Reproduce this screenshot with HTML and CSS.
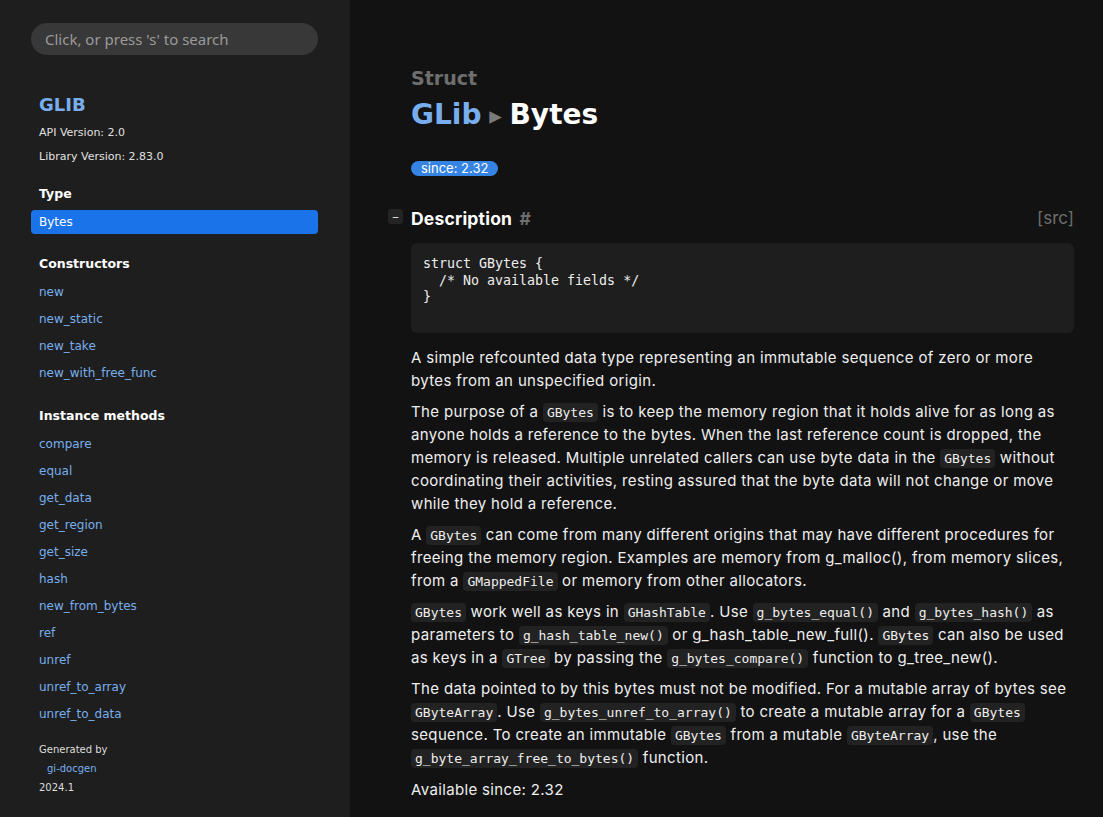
FILE: index.html
```html
<!DOCTYPE html>
<html lang="en">
<head>
<meta charset="utf-8">
<title>GLib.Bytes</title>
<link rel="stylesheet" href="styles.css">
</head>
<body>
<div class="page">
  <nav class="sidebar">
    <div class="search">Click, or press 's' to search</div>
    <div class="ns">
      <h2 class="ns-name">GLIB</h2>
      <p class="meta">API Version: 2.0</p>
      <p class="meta">Library Version: 2.83.0</p>
    </div>
    <div class="section first">
      <h3 class="sec-title">Type</h3>
      <a class="item current">Bytes</a>
    </div>
    <div class="section list">
      <h3 class="sec-title">Constructors</h3>
      <a class="item">new</a>
      <a class="item">new_static</a>
      <a class="item">new_take</a>
      <a class="item">new_with_free_func</a>
    </div>
    <div class="section list">
      <h3 class="sec-title">Instance methods</h3>
      <a class="item">compare</a>
      <a class="item">equal</a>
      <a class="item">get_data</a>
      <a class="item">get_region</a>
      <a class="item">get_size</a>
      <a class="item">hash</a>
      <a class="item">new_from_bytes</a>
      <a class="item">ref</a>
      <a class="item">unref</a>
      <a class="item">unref_to_array</a>
      <a class="item">unref_to_data</a>
    </div>
    <div class="generated">
      <p>Generated by</p>
      <p class="gen-link">gi-docgen</p>
      <p>2024.1</p>
    </div>
  </nav>
  <main class="content">
    <header class="title">
      <div class="kind">Struct</div>
      <h1 class="name"><span class="ns-link">GLib</span> <span class="sep">▸</span> <span>Bytes</span></h1>
    </header>
    <div class="badges"><span class="badge">since: 2.32</span></div>
    <section class="desc">
      <div class="desc-head">
        <span class="toggle">−</span>
        <h4 class="desc-title">Description <span class="anchor">#</span></h4>
        <span class="src">[src]</span>
      </div>
      <pre class="codeblock">struct GBytes {
  /* No available fields */
}</pre>
      <p>A simple refcounted data type representing an immutable sequence of zero or more bytes from an unspecified origin.</p>
      <p>The purpose of a <code>GBytes</code> is to keep the memory region that it holds alive for as long as anyone holds a reference to the bytes. When the last reference count is dropped, the memory is released. Multiple unrelated callers can use byte data in the <code>GBytes</code> without coordinating their activities, resting assured that the byte data will not change or move while they hold a reference.</p>
      <p>A <code>GBytes</code> can come from many different origins that may have different procedures for freeing the memory region. Examples are memory from g_malloc(), from memory slices, from a <code>GMappedFile</code> or memory from other allocators.</p>
      <p><code>GBytes</code> work well as keys in <code>GHashTable</code>. Use <code>g_bytes_equal()</code> and <code>g_bytes_hash()</code> as parameters to <code>g_hash_table_new()</code> or g_hash_table_new_full(). <code>GBytes</code> can also be used as keys in a <code>GTree</code> by passing the <code>g_bytes_compare()</code> function to g_tree_new().</p>
      <p>The data pointed to by this bytes must not be modified. For a mutable array of bytes see <code>GByteArray</code>. Use <code>g_bytes_unref_to_array()</code> to create a mutable array for a <code>GBytes</code> sequence. To create an immutable <code>GBytes</code> from a mutable <code>GByteArray</code>, use the <code>g_byte_array_free_to_bytes()</code> function.</p>
      <p>Available since: 2.32</p>
    </section>
  </main>
</div>
</body>
</html>
```
FILE: styles.css
```css
* { box-sizing: border-box; }
html, body { margin: 0; padding: 0; height: 100%; }
body {
  background: #121212;
  color: #eeeeee;
  font-family: Inter, "Noto Sans", sans-serif;
  overflow: hidden;
}
.page { display: flex; height: 817px; }
.sidebar {
  width: 350px;
  flex: none;
  background: #1e1e1e;
  padding: 23px 32px 0 31px;
  font-family: "DejaVu Sans", sans-serif;
}
.search {
  height: 32px;
  border-radius: 16px;
  background: #383838;
  color: #9a9a9a;
  font-family: "Noto Sans", sans-serif;
  font-size: 15px;
  line-height: 32px;
  padding-left: 14px;
}
.ns { padding: 39px 0 0 8px; }
.ns-name {
  margin: 0;
  font-size: 18px;
  font-weight: bold;
  color: #78aeed;
  line-height: 22px;
}
.meta {
  margin: 0;
  font-size: 11px;
  line-height: 24px;
  color: #e0e0e0;
}
.meta:first-of-type { margin-top: 5px; }
.section { display: flex; flex-direction: column; margin-top: 19px; }
.section.first { margin-top: 15px; }
.sec-title {
  margin: 0 0 4px 8px;
  font-size: 12.5px;
  font-weight: bold;
  color: #ffffff;
  line-height: 20px;
}
.section.list .sec-title { margin-bottom: 5px; }
.item {
  font-size: 12px;
  line-height: 27px;
  color: #78aeed;
  padding-left: 8px;
}
.item.current {
  background: #1a73e8;
  color: #ffffff;
  border-radius: 4px;
  line-height: 24px;
  margin: 2px 0 1px;
}
.generated { padding: 12px 0 0 8px; font-size: 10px; color: #dddddd; }
.generated p { margin: 0; line-height: 19px; }
.generated .gen-link { color: #78aeed; padding-left: 8px; }
.content {
  flex: 1;
  padding: 66px 29px 0 61px;
}
.kind {
  font-family: "DejaVu Sans", sans-serif;
  font-size: 19px;
  font-weight: bold;
  color: #6e6e6e;
  line-height: 24px;
}
.name {
  margin: 3px 0 0;
  font-family: "DejaVu Sans", sans-serif;
  font-size: 28px;
  font-weight: bold;
  line-height: 44px;
  color: #ffffff;
  word-spacing: -2px;
}
.ns-link { color: #78aeed; }
.sep { color: #7a7a7a; font-size: 25px; vertical-align: 0; }
.badges { margin-top: 19px; }
.badge {
  display: inline-block;
  background: #3584e4;
  color: #ffffff;
  font-size: 13px;
  line-height: 15px;
  padding: 0 10px;
  border-radius: 8px;
}
.desc { margin-top: 28px; }
.desc-head { display: flex; align-items: center; position: relative; height: 26px; }
.toggle {
  position: absolute;
  left: -23px;
  top: 4px;
  width: 15px;
  height: 15px;
  background: #242424;
  border-radius: 3px;
  color: #dddddd;
  font-size: 12px;
  line-height: 15px;
  text-align: center;
}
.desc-title {
  margin: 0;
  font-size: 17.5px;
  font-weight: 700;
  letter-spacing: 0.2px;
  color: #ffffff;
  flex: 1;
}
.anchor { color: #6e6e6e; margin-left: 3px; }
.src { color: #6e6e6e; font-size: 17px; }
.codeblock {
  margin: 12px 0 13px;
  background: #1e1e1e;
  border-radius: 6px;
  padding: 13px 12px 27px;
  font-family: "DejaVu Sans Mono", monospace;
  font-size: 13.3px;
  line-height: 16.5px;
  color: #eeeeee;
}
.desc p {
  margin: 0 0 8px;
  font-size: 15px;
  line-height: 23px;
  letter-spacing: 0.35px;
  color: #eeeeee;
}
.desc p:last-child { margin-top: 9px; }
code {
  font-family: "DejaVu Sans Mono", monospace;
  font-size: 13px;
  line-height: 1;
  letter-spacing: 0;
  background: #222222;
  border-radius: 4px;
  padding: 2px 4px;
}
```
